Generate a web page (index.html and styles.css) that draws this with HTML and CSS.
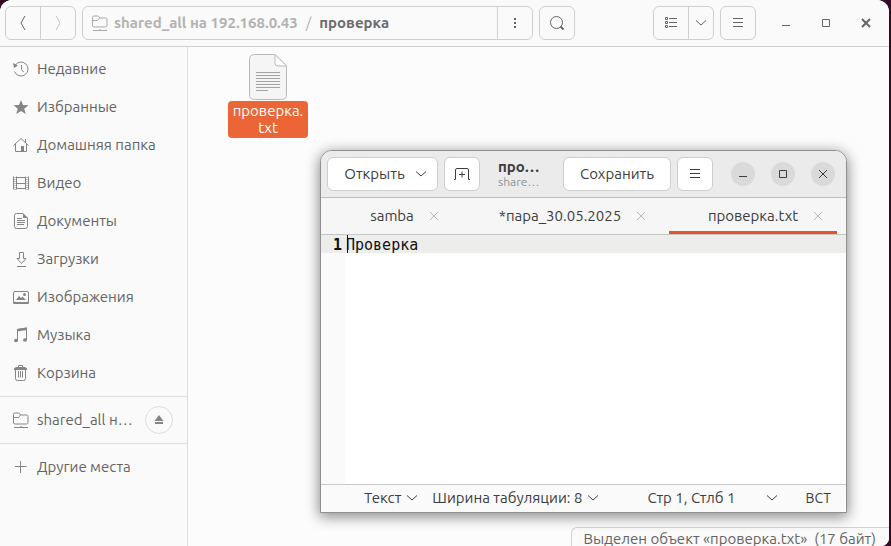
FILE: index.html
```html
<!DOCTYPE html>
<html lang="ru">
<head>
<meta charset="utf-8">
<title>проверка</title>
<link rel="stylesheet" href="styles.css">
</head>
<body>
<svg class="defs" aria-hidden="true">
  <symbol id="chev" viewBox="0 0 16 16"><path d="M3 5.500l5 4.500 5-4.500"/></symbol>
  <symbol id="netfolder" viewBox="0 0 18 18"><path d="M1.500 12V3.500q0-1.500 1.500-1.500h3.500q1 0 1.500 1l.5 1h6q1.500 0 1.500 1.500V11.500q0 1.500-1.500 1.500H3q-1.500 0-1.500-1.500M1.500 6.500H6q1 0 1.500-1l1-1.500M2 16.500h14M9 15v1.500"/></symbol>
  <symbol id="menu" viewBox="0 0 16 16"><path d="M3 3.500h10M3 7.500h10M3 11.500h10"/></symbol>
  <symbol id="min" viewBox="0 0 16 16"><path d="M4 10.500h8"/></symbol>
  <symbol id="max" viewBox="0 0 16 16"><path d="M4.500 4.500h7v7h-7z"/></symbol>
  <symbol id="close" viewBox="0 0 16 16"><path d="M4 4l8 8M12 4l-8 8"/></symbol>
</svg>

<main class="files">
  <header class="bar">
    <div class="group">
      <button class="btn w34" aria-label="Назад"><svg class="ic" viewBox="0 0 16 16"><path d="M10 1L6 8l4 7"/></svg></button>
      <button class="btn w35 off" aria-label="Вперёд"><svg class="ic" viewBox="0 0 16 16"><path d="M6 1l4 7-4 7"/></svg></button>
    </div>
    <nav class="group path" aria-label="Путь">
      <div class="crumbs">
        <svg class="ic18" viewBox="0 0 18 18"><use href="#netfolder"/></svg>
        <a href="#">shared_all на 192.168.0.43</a><span class="slash">/</span><a href="#" class="current">проверка</a>
      </div>
      <button class="btn w35" aria-label="Меню папки"><svg class="ic fill" viewBox="0 0 16 16"><path d="M7 3h2v2H7zM7 7h2v2H7zM7 11h2v2H7z"/></svg></button>
    </nav>
    <div class="group">
      <button class="btn w34" aria-label="Поиск"><svg class="ic" viewBox="0 0 16 16"><circle cx="7.500" cy="7.500" r="6"/><path class="bold" d="M11.500 11.500l3 3"/></svg></button>
    </div>
    <div class="space"></div>
    <div class="group">
      <button class="btn w34" aria-label="Список"><svg class="ic" viewBox="0 0 16 16"><path d="M2.500 2.500h2v2h-2zM2.500 6.500h2v2h-2zM2.500 10.500h2v2h-2zM6 3.500h8M6 7.500h8M6 11.500h8"/></svg></button>
      <button class="btn w25" aria-label="Параметры вида"><svg class="ic"><use href="#chev"/></svg></button>
    </div>
    <div class="group">
      <button class="btn w34" aria-label="Меню"><svg class="ic"><use href="#menu"/></svg></button>
    </div>
    <div class="controls">
      <button aria-label="Свернуть"><svg class="ic"><use href="#min"/></svg></button>
      <button aria-label="Развернуть"><svg class="ic"><use href="#max"/></svg></button>
      <button aria-label="Закрыть"><svg class="ic bold"><use href="#close"/></svg></button>
    </div>
  </header>
  <div class="body">
    <aside class="side">
      <nav>
        <a href="#"><svg class="ic" viewBox="0 0 16 16"><path d="M2 4.500A7 7 0 1 1 1.500 10.500M8.500 4v4.500l2 2.500"/><path class="solid" d="M0 2l1 5 4-2.500z"/></svg>Недавние</a>
        <a href="#"><svg class="ic fill" viewBox="0 0 16 16"><path d="M8 1l2 5 5.500.300-4.300 3.400L12.800 15 8 12l-4.800 3 1.600-5.300L.500 6.300 6 6z"/></svg>Избранные</a>
        <a href="#"><svg class="ic" viewBox="0 0 16 16"><path d="M.500 8.500L8 1.500l7.500 7M2.500 7v7.500h11V7M12.500 2v4"/><path class="solid" d="M8 9h3v6H8z"/></svg>Домашняя папка</a>
        <a href="#"><svg class="ic" viewBox="0 0 16 16"><path d="M.500 1.500v13M15.500 1.500v13M3.500 1.500v13M12.500 1.500v13M3.500 2.500h9M3.500 8.500h9M3.500 13.500h9"/><path class="dots" d="M2 2v13M14 2v13"/></svg>Видео</a>
        <a href="#"><svg class="ic" viewBox="0 0 16 16"><path d="M10 .500H3.500q-2 0-2 2v11q0 2 2 2h9q2 0 2-2V5zM4 5.500h5M4 7.500h8M4 9.500h8M4 11.500h7"/><path class="solid" d="M10 .500V5h4.500z"/></svg>Документы</a>
        <a href="#"><svg class="ic" viewBox="0 0 16 16"><path d="M6.500 1.500h4v6H13l-4.500 5L4 7.500h2.500zM4 15.500h9"/></svg>Загрузки</a>
        <a href="#"><svg class="ic" viewBox="0 0 16 16"><rect x=".500" y="2.500" width="15" height="11" rx="1.500"/><path class="solid" d="M0 13h16v1q0 1-1.500 1h-13Q0 15 0 14zM3 11l3-4 2 2 1.500-1.500L13 11z"/><circle class="solid" cx="11.500" cy="5.500" r="1.500"/></svg>Изображения</a>
        <a href="#"><svg class="ic" viewBox="0 0 16 16"><path d="M4.500 13.500V2.500l9-1.500v12"/><path class="solid" d="M4 2l10-1.500V3L4 4.500z"/><ellipse class="solid" cx="3" cy="13.500" rx="2" ry="1.800"/><ellipse class="solid" cx="12" cy="13" rx="2" ry="1.800"/></svg>Музыка</a>
        <a href="#"><svg class="ic" viewBox="0 0 16 16"><path d="M2.500 5v8.500q0 2 2 2h6q2 0 2-2V5M5.500 6v6.500M7.500 6v6.500M9.500 6v6.500M5.500 2.500v-2h4v2"/><path class="solid" d="M3 2h9l2 1.500V5H1V3.500z"/></svg>Корзина</a>
      </nav>
      <nav class="sep">
        <div class="mount">
          <a href="#"><svg class="ic18" viewBox="0 0 18 18"><use href="#netfolder"/></svg><span>shared_all н…</span></a>
          <button class="eject" aria-label="Извлечь"><svg class="ic12" viewBox="0 0 12 12"><path d="M6 1l4.500 6h-9zM2 8h8v2H2z"/></svg></button>
        </div>
      </nav>
      <nav class="sep">
        <a href="#"><svg class="ic" viewBox="0 0 16 16"><path d="M7.500 2v12M2 7.500h11.500"/></svg>Другие места</a>
      </nav>
    </aside>
    <section class="view">
      <a href="#" class="file">
        <svg class="doc" viewBox="0 0 38 46"><path class="sheet" d="M26 .500H5.500q-5 0-5 5v35q0 5 5 5h27q5 0 5-5V12z"/><path class="fold" d="M26 .500V9q0 3 3 3h8.500z"/><path class="lines" d="M7 18.500h24M7 21.500h24M7 24.500h24M7 27.500h24M7 30.500h24M7 33.500h24M7 36.500h12"/></svg>
        <span class="label">проверка.<br>txt</span>
      </a>
      <p class="info">Выделен объект «проверка.txt»&nbsp; (17 байт)</p>
    </section>
  </div>
</main>

<section class="editor" aria-label="Текстовый редактор">
  <header class="ebar">
    <button class="ebtn open">Открыть<svg class="ic"><use href="#chev"/></svg></button>
    <button class="ebtn w36" aria-label="Новая вкладка"><svg class="ic" viewBox="0 0 16 16"><path d="M0 13.500h1.500V4q0-1.500 1.500-1.500h10q1.500 0 1.500 1.500v9.500H16M8 5.500v6M5 8.500h6"/></svg></button>
    <div class="title"><strong>про…</strong><small>share…</small></div>
    <button class="ebtn save">Сохранить</button>
    <button class="ebtn w36" aria-label="Меню"><svg class="ic"><use href="#menu"/></svg></button>
    <div class="econtrols">
      <button aria-label="Свернуть"><svg class="ic"><use href="#min"/></svg></button>
      <button aria-label="Развернуть"><svg class="ic"><use href="#max"/></svg></button>
      <button aria-label="Закрыть"><svg class="ic"><use href="#close"/></svg></button>
    </div>
  </header>
  <div class="tabs">
    <div class="tab"><a href="#">samba</a><button aria-label="Закрыть samba"><svg class="ic"><use href="#close"/></svg></button></div>
    <div class="tab"><a href="#">*пара_30.05.2025</a><button aria-label="Закрыть пара"><svg class="ic"><use href="#close"/></svg></button></div>
    <div class="tab active"><a href="#">проверка.txt</a><button aria-label="Закрыть проверка"><svg class="ic"><use href="#close"/></svg></button></div>
  </div>
  <div class="text">
    <span class="num">1</span>
    <textarea aria-label="Текст документа" spellcheck="false">Проверка</textarea>
  </div>
  <footer class="status">
    <button class="lang">Текст<svg class="ic"><use href="#chev"/></svg></button>
    <button>Ширина табуляции: 8<svg class="ic"><use href="#chev"/></svg></button>
    <button class="pos">Стр 1, Стлб 1<svg class="ic"><use href="#chev"/></svg></button>
    <span class="ins">ВСТ</span>
  </footer>
</section>
</body>
</html>
```
FILE: styles.css
```css
* { box-sizing: border-box; }
body {
  margin: 0;
  min-height: 100vh;
  display: flex;
  background: #350a25;
  font: 15px/20px Ubuntu, "Noto Sans", sans-serif;
  color: #646464;
  position: relative;
  overflow: hidden;
}
a { color: inherit; text-decoration: none; }
button { font: inherit; color: inherit; background: none; border: 0; padding: 0; display: flex; align-items: center; justify-content: center; }
svg { fill: none; stroke: currentColor; flex: none; }
.defs { position: absolute; width: 0; height: 0; }
.ic { width: 16px; height: 16px; }
.ic18 { width: 18px; height: 18px; }
.ic12 { width: 12px; height: 12px; fill: currentColor; stroke: none; }
.fill, .solid { fill: currentColor; stroke: none; }
.bold { stroke-width: 2; }

.files { flex: 1; margin-right: 2px; display: flex; flex-direction: column; background: #fcfcfc; border-radius: 12px 12px 8px 0; overflow: hidden; }
.bar { height: 47px; display: flex; align-items: center; gap: 6px; padding: 0 5px; background: #fafafa; border-bottom: 1px solid #cfcfcf; }
.group { display: flex; height: 34px; border: 1px solid #cfcfcf; border-radius: 6px; }
.group > * + * { border-left: 1px solid #cfcfcf; }
.w35 { width: 35px; }
.w34 { width: 34px; }
.w25 { width: 25px; }
.off { color: #c4c4c4; }
.path { flex: 0 1 451px; min-width: 0; }
.crumbs { flex: 1; display: flex; align-items: center; padding-left: 8px; font-weight: bold; color: #b2b2b2; white-space: nowrap; overflow: hidden; }
.crumbs .ic18 { margin-right: 5px; color: #a8a8a8; }
.slash { margin: 0 8px; font-weight: normal; }
.current { color: #6c6c6c; }
.space { flex: 1; }
.controls { display: flex; gap: 16px; padding: 0 6px 0 12px; }
.controls button { width: 24px; height: 24px; }

.body { flex: 1; display: flex; }
.side { width: 188px; border-right: 1px solid #dedede; background: #fafafa; }
.side nav { padding: 3px 0 4px; }
.side .sep { border-top: 1px solid #dcdcdc; padding: 4px 0; }
.side a { display: flex; align-items: center; gap: 8px; height: 38px; padding-left: 13px; min-width: 0; }
.side svg { color: #858585; }
.side .ic18 { margin: 0 -1px; }
.dots { stroke-dasharray: 1 1; }
.mount { display: flex; align-items: center; gap: 8px; padding-right: 14px; }
.mount a { flex: 1; }
.mount span { white-space: nowrap; }
.eject { width: 28px; height: 28px; border: 1px solid #dedede; border-radius: 50%; }

.view { flex: 1; display: flex; flex-direction: column; justify-content: space-between; }
.file { width: 80px; margin: 7px 0 0 40px; display: flex; flex-direction: column; align-items: center; }
.doc { width: 38px; height: 46px; }
.sheet { fill: #f5f5f5; stroke: #b9b9b9; }
.fold { fill: #fff; stroke: #b9b9b9; }
.lines { stroke: #a5a5a5; }
.label { width: 80px; margin-top: 1px; padding: 1px 0 2px; border-radius: 4px; background: #ec6536; color: #fff; line-height: 17px; text-align: center; }
.info { align-self: flex-end; margin: 0; height: 19px; padding: 1px 13px 0 12px; border: 1px solid #d3d3d3; border-width: 1px 0 0 1px; border-radius: 6px 0 0 0; background: #fafafa; white-space: nowrap; }

.editor { position: absolute; left: 320px; top: 150px; width: 527px; height: 363px; display: flex; flex-direction: column; border: 1px solid #8f8f8f; border-radius: 12px 12px 0 0; overflow: hidden; background: #fff; color: #3d3d3d; box-shadow: 0 3px 14px 1px rgba(0, 0, 0, .45); }
.ebar { flex: none; height: 47px; display: flex; align-items: center; gap: 6px; padding: 0 11px 0 6px; background: #ebebeb; border-bottom: 1px solid #bfbfbf; }
.ebtn { height: 34px; border: 1px solid #cdcdcd; border-radius: 6px; background: #fff; }
.open { width: 111px; gap: 8px; padding-left: 8px; }
.save { width: 108px; }
.w36 { width: 36px; }
.title { flex: 1; min-width: 0; padding: 0 12px; line-height: 16px; white-space: nowrap; }
.title > * { display: block; }
.title small { font-size: 12px; line-height: 14px; color: #929292; }
.econtrols { display: flex; gap: 16px; padding-left: 12px; }
.econtrols button { width: 24px; height: 24px; border-radius: 50%; background: #dadada; }

.tabs { flex: none; height: 37px; display: grid; grid-template-columns: 118fr 218fr 168fr; padding: 0 9px 0 12px; background: #f6f6f6; border-bottom: 1px solid #c6c6c6; }
.tab { display: flex; align-items: center; justify-content: center; padding-left: 28px; gap: 12px; }
.tab button { width: 16px; height: 16px; color: #b8b8b8; }
.active { border-bottom: 3px solid #e2562a; padding-top: 3px; }

.text { flex: 1; display: grid; grid-template-columns: 24px 1fr; background: linear-gradient(#ededec 18px, transparent 18px), linear-gradient(90deg, #fafafa 24px, #fff 24px); font: 15px/20px "DejaVu Sans Mono", monospace; color: #111; }
.num { text-align: right; padding-right: 3px; font-weight: bold; }
.text textarea { height: 100%; margin: 0 0 0 1px; padding: 0; border: 0; outline: 0; resize: none; background: linear-gradient(#111, #111) 1px 0 / 1px 18px no-repeat; font: inherit; color: inherit; }

.status { flex: none; height: 28px; display: flex; align-items: center; padding: 0 15px 2px 43px; border-top: 1px solid #c9c9c9; background: #fafafa; white-space: nowrap; font-size: 14px; }
.status button { gap: 3px; font-size: 15px; }
.lang { margin-right: 12px; }
.pos { flex: 1; justify-content: flex-end; }
.status .pos { gap: 28px; }
.ins { margin-left: 26px; }
```
